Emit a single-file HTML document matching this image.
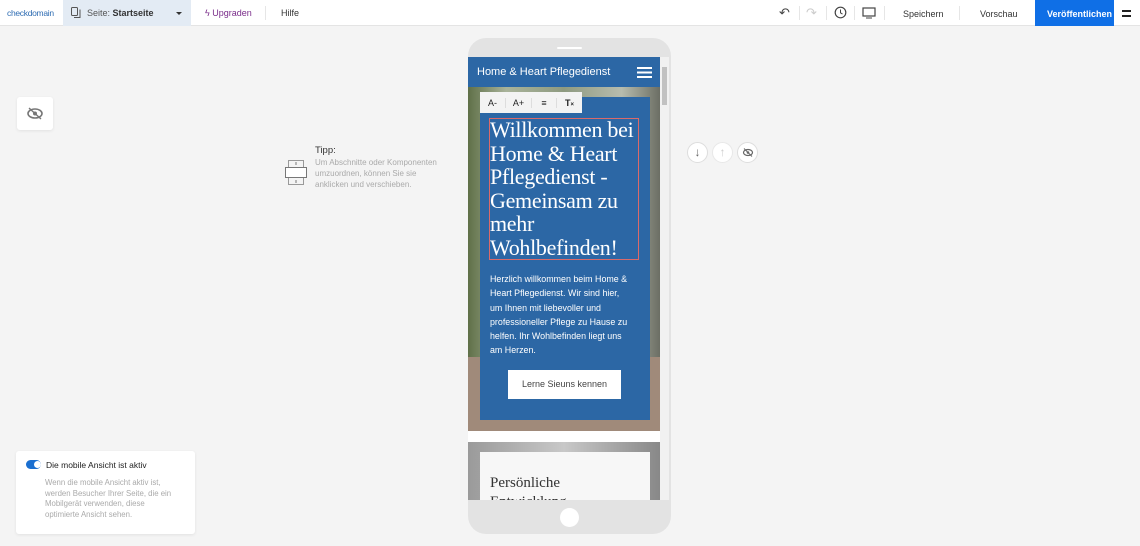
<!DOCTYPE html>
<html><head><meta charset="utf-8"><style>
*{margin:0;padding:0;box-sizing:border-box}
body{width:1140px;height:546px;background:#f4f4f4;font-family:"Liberation Sans",sans-serif;position:relative;overflow:hidden}
.a{position:absolute}
.top{left:0;top:0;width:1140px;height:26px;background:#fff;border-bottom:1px solid #e4e4e4}
.t{font-size:9px;color:#333;white-space:nowrap}
.sep{width:1px;height:14px;background:#e6e6e6;top:6px}
</style></head><body>
<div class="a top"></div>
<div class="a t" style="left:7px;top:8px;color:#2f6db3;font-size:8.5px;letter-spacing:-.3px">checkdomain</div>
<div class="a" style="left:63px;top:0;width:128px;height:26px;background:#e3ebf4"></div>
<svg class="a" style="left:71px;top:7px" width="10" height="11"><rect x="0.5" y="0.5" width="6" height="8" fill="none" stroke="#555" rx="1"/><path d="M3 10.5h6v-8" fill="none" stroke="#555"/></svg>
<div class="a t" style="left:87px;top:8px;color:#555">Seite: <b style="color:#333;font-weight:600">Startseite</b></div>
<div class="a" style="left:176px;top:12px;border:3px solid transparent;border-top:3px solid #333"></div>
<div class="a t" style="left:205px;top:8px;color:#7a2d8a">ϟ Upgraden</div>
<div class="a sep" style="left:265px"></div>
<div class="a t" style="left:281px;top:8px">Hilfe</div>
<div class="a t" style="left:779px;top:5px;font-size:13px;color:#444">↶</div>
<div class="a sep" style="left:799px"></div>
<div class="a t" style="left:806px;top:5px;font-size:13px;color:#ccc">↷</div>
<div class="a sep" style="left:826px"></div>
<svg class="a" style="left:834px;top:6px" width="13" height="13"><circle cx="6.5" cy="6.5" r="5.3" fill="none" stroke="#444" stroke-width="1.2"/><path d="M6.5 3.5v3.3l2 1.3" fill="none" stroke="#444"/></svg>
<div class="a sep" style="left:854px"></div>
<svg class="a" style="left:862px;top:7px" width="14" height="12"><rect x="1" y="1" width="12" height="8" fill="none" stroke="#444" stroke-width="1.2"/><path d="M4 11h6" stroke="#444"/></svg>
<div class="a sep" style="left:884px"></div>
<div class="a t" style="left:903px;top:9px">Speichern</div>
<div class="a sep" style="left:959px"></div>
<div class="a t" style="left:980px;top:9px">Vorschau</div>
<div class="a" style="left:1035px;top:0;width:79px;height:26px;background:#0f6fe6"></div>
<div class="a t" style="left:1047px;top:9px;color:#fff;font-weight:600">Veröffentlichen</div>
<div class="a" style="left:1122px;top:10px;width:9px;height:1.5px;background:#222"></div>
<div class="a" style="left:1122px;top:15px;width:9px;height:1.5px;background:#222"></div>

<div class="a" style="left:17px;top:97px;width:36px;height:33px;background:#fff;border-radius:3px;box-shadow:0 1px 3px rgba(0,0,0,.08)"></div>
<svg class="a" style="left:26px;top:107px" width="18" height="13"><ellipse cx="9" cy="6.5" rx="7" ry="4.5" fill="none" stroke="#777" stroke-width="1.6"/><circle cx="9" cy="6.5" r="2" fill="#777"/><path d="M3 1l12 11" stroke="#777" stroke-width="1.4"/></svg>

<svg class="a" style="left:284px;top:159px" width="24" height="27"><rect x="4.5" y="1.5" width="15" height="24" fill="none" stroke="#999"/><rect x="1.5" y="8.5" width="21" height="10" fill="#fff" stroke="#777"/><path d="M12 3v3M12 21v3" stroke="#777"/></svg>
<div class="a t" style="left:315px;top:145px;font-size:9.5px;color:#333">Tipp:</div>
<div class="a" style="left:315px;top:157px;font-size:8px;color:#aaa;line-height:11px;width:128px">Um Abschnitte oder Komponenten umzuordnen, können Sie sie anklicken und verschieben.</div>

<div class="a" style="left:16px;top:451px;width:179px;height:83px;background:#fff;border-radius:3px;box-shadow:0 1px 3px rgba(0,0,0,.08)"></div>
<div class="a" style="left:26px;top:460px;width:15px;height:9px;border-radius:5px;background:#1b6fd0"></div>
<div class="a" style="left:34px;top:461px;width:7px;height:7px;border-radius:50%;background:#fff"></div>
<div class="a t" style="left:46px;top:460px;font-size:8.5px;color:#222">Die mobile Ansicht ist aktiv</div>
<div class="a" style="left:45px;top:478px;width:135px;font-size:7.8px;color:#aaa;line-height:10.5px">Wenn die mobile Ansicht aktiv ist, werden Besucher Ihrer Seite, die ein Mobilgerät verwenden, diese optimierte Ansicht sehen.</div>

<!-- phone -->
<div class="a" style="left:468px;top:38px;width:203px;height:496px;background:#e3e3e3;border-radius:18px"></div>
<div class="a" style="left:557px;top:47px;width:25px;height:2px;background:#fff;border-radius:1px"></div>
<div class="a" style="left:468px;top:57px;width:201px;height:443px;background:#fff;overflow:hidden">
 <div class="a" style="left:0;top:0;width:192px;height:30px;background:#2c67a5"></div>
 <div class="a t" style="left:9px;top:9px;color:#fff;font-size:11px">Home &amp; Heart Pflegedienst</div>
 <div class="a" style="left:169px;top:10px;width:15px;height:1.5px;background:#fff;box-shadow:0 4.5px 0 #fff,0 9px 0 #fff"></div>
 <div class="a" style="left:0;top:30px;width:192px;height:344px;background:linear-gradient(90deg,#5f7048,#a9b39a 20%,#8e9a80 50%,#b7bcae 80%,#6b6e64)"></div>
 <div class="a" style="left:0;top:300px;width:192px;height:74px;background:#a08a7a"></div>
 <div class="a" style="left:12px;top:40px;width:170px;height:323px;background:#2c67a5"></div>
 <div class="a" style="left:12px;top:35px;width:102px;height:21px;background:#f3f3f3;display:flex;font-size:9px;color:#222;align-items:center">
  <span style="width:25px;text-align:center">A-</span><span style="width:26px;text-align:center;border-left:1px solid #ddd">A+</span><span style="width:25px;text-align:center;border-left:1px solid #ddd">≡</span><span style="width:26px;text-align:center;border-left:1px solid #ddd;font-weight:bold">T<small style="font-size:6px">×</small></span></div>
 <div class="a" style="left:21px;top:61px;width:150px;height:142px;border:1px solid #d96a6a"></div>
 <div class="a" style="left:22px;top:61px;color:#fff;font-family:'Liberation Serif',serif;font-size:22px;line-height:23.5px;white-space:nowrap;letter-spacing:-.3px">Willkommen bei<br>Home &amp; Heart<br>Pflegedienst -<br>Gemeinsam zu<br>mehr<br>Wohlbefinden!</div>
 <div class="a" style="left:22px;top:215px;color:#fff;font-size:8.9px;line-height:14.3px;white-space:nowrap">Herzlich willkommen beim Home &amp;<br>Heart Pflegedienst. Wir sind hier,<br>um Ihnen mit liebevoller und<br>professioneller Pflege zu Hause zu<br>helfen. Ihr Wohlbefinden liegt uns<br>am Herzen.</div>
 <div class="a" style="left:40px;top:313px;width:113px;height:29px;background:#fff;font-size:9px;color:#444;text-align:center;line-height:29px">Lerne Sieuns kennen</div>
 <div class="a" style="left:0;top:385px;width:192px;height:60px;background:linear-gradient(90deg,#9a9a9a,#c8c8c8 50%,#888)"></div>
 <div class="a" style="left:12px;top:395px;width:170px;height:50px;background:#f7f7f7"></div>
 <div class="a" style="left:22px;top:417px;color:#333;font-family:'Liberation Serif',serif;font-size:15px;line-height:19px">Persönliche<br>Entwicklung</div>
 <div class="a" style="left:192px;top:0;width:9px;height:443px;background:#f1f1f1"></div>
 <div class="a" style="left:194px;top:10px;width:5px;height:38px;background:#c1c1c1"></div>
</div>
<div class="a" style="left:560px;top:508px;width:19px;height:19px;border-radius:50%;background:#fff"></div>

<div class="a" style="left:687px;top:142px;width:21px;height:21px;border-radius:50%;background:#fff;border:1px solid #ddd;color:#666;font-size:12px;text-align:center;line-height:19px">↓</div>
<div class="a" style="left:712px;top:142px;width:21px;height:21px;border-radius:50%;background:#fff;border:1px solid #e8e8e8;color:#ccc;font-size:12px;text-align:center;line-height:19px">↑</div>
<div class="a" style="left:737px;top:142px;width:21px;height:21px;border-radius:50%;background:#fff;border:1px solid #ddd"></div>
<svg class="a" style="left:742px;top:148px" width="12" height="9"><ellipse cx="6" cy="4.5" rx="4.5" ry="3" fill="none" stroke="#666" stroke-width="1.2"/><circle cx="6" cy="4.5" r="1.3" fill="#666"/><path d="M2 0.5l8 8" stroke="#666"/></svg>
</body></html>
